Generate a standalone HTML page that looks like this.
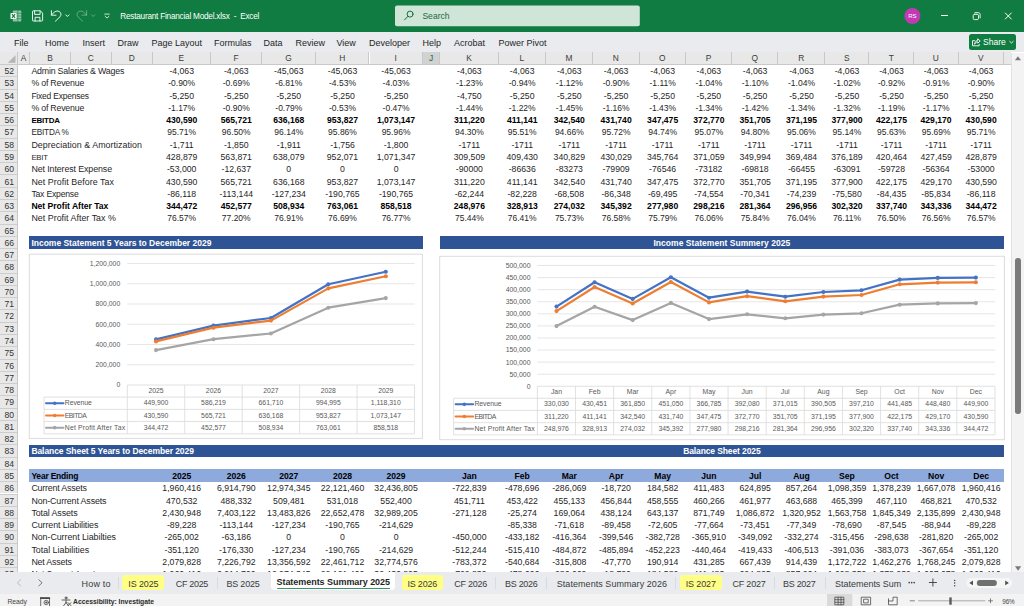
<!DOCTYPE html>
<html lang="en"><head><meta charset="utf-8"><title>Restaurant Financial Model.xlsx - Excel</title>
<style>
html,body{margin:0;padding:0}
body{width:1024px;height:606px;overflow:hidden;position:relative;background:#fff;font-family:"Liberation Sans",sans-serif;color:#222}
.abs,.c,.l,.rh,.ch{position:absolute}
#title{left:0;top:0;width:1024px;height:31.5px;background:#107c41}
#ribbon{left:0;top:31.5px;width:1024px;height:20.3px;background:#e9ebef}
#ribbon span{position:absolute;top:6.4px;font-size:9px;color:#262626;white-space:nowrap}
#grid{left:0;top:51px;width:1011px;height:521.2px;overflow:hidden;background:#fff}
.ch{top:.5px;height:13px;background:#e8e8e8;border-right:1px solid #c8c8c8;box-sizing:border-box;font-size:8.4px;line-height:13px;text-align:center;color:#3c3c3c}
.rh{left:0;width:18px;height:12.27px;background:#e8e8e8;border-top:1px solid #cdcdcd;border-right:1px solid #c8c8c8;box-sizing:border-box;font-size:8.6px;text-align:center;color:#333}
.rh span{position:absolute;left:0;width:17px;line-height:12px;height:12px}
.c{height:12px;line-height:12px;font-size:8.7px;text-align:center;white-space:nowrap;color:#1f1f1f}
.l{height:12px;line-height:12px;font-size:8.9px;white-space:nowrap;color:#1f1f1f;left:31.4px}
.l.b{font-size:8.6px}
.c.b{font-size:8.6px}
.c.p{font-size:8.5px}
.rn{position:absolute;left:0;width:18.4px;height:12px;line-height:12px;font-size:8.6px;text-align:center;color:#333}
.b{font-weight:bold;color:#000}
.bar{position:absolute;background:#2f5496;height:12.27px}
.bt{position:absolute;color:#fff;font-weight:bold;font-size:8.5px;line-height:12px;height:12px;white-space:nowrap}
svg text{font-family:"Liberation Sans",sans-serif}
</style></head><body>

<div id="title" class="abs">
<svg class="abs" style="left:0;top:0" width="1024" height="32" viewBox="0 0 1024 32" fill="none" stroke="#fff" stroke-width=".9" stroke-linecap="round" stroke-linejoin="round">
<!-- excel logo -->
<g stroke="none">
<rect x="12.800" y="10.500" width="8.500" height="11" rx="1" fill="#fff" fill-opacity=".55"/>
<path d="M12.800 13.300H21.300M12.800 16H21.300M12.800 18.700H21.300M17.800 10.500V21.500" stroke="#107c41" stroke-width=".7" stroke-opacity=".8"/>
<rect x="10.500" y="13" width="6" height="6" rx=".7" fill="#fff"/>
<path d="M12.200 14.300L14.800 17.700M14.800 14.300L12.200 17.700" stroke="#107c41" stroke-width="1.1"/>
</g>
<!-- save -->
<path d="M32.5 11.5a.7.7 0 0 1 .7-.7H40.3L42.6 13.1V20.3a.7.7 0 0 1-.7.7H33.2a.7.7 0 0 1-.7-.7Z"/>
<path d="M34.6 10.9V14.4H40.1V10.9M35.1 21V17.3H39.9V21"/>
<!-- undo -->
<path d="M51.4 10.6V15.2H56M51.6 15C53.5 12 56.5 10.300 59 11.4C61.2 12.5 61.600 15 60 16.8L55.4 21.2"/>
<path d="M65.8 14.900L67.400 16.500L69 14.900"/>
<!-- redo (disabled) -->
<g stroke-opacity=".38">
<path d="M86.600 10.6V15.2H82M86.400 15C84.5 12 81.5 10.300 79 11.4C76.800 12.5 76.400 15 78 16.8L82.600 21.2"/>
<path d="M91.600 14.900L93.200 16.500L94.800 14.900"/>
</g>
<!-- customize QAT -->
<path d="M104.800 14.100H109.200M105.100 16.300L107 18.100L108.900 16.300" stroke-width=".8"/>
<!-- search box -->
<rect x="395" y="5.500" width="244.800" height="20.700" rx="2" fill="#cfe5d8" stroke="none"/>
<g stroke="#1e6b41" stroke-width="1">
<circle cx="410.100" cy="14.100" r="3"/><path d="M408 16.300L404.600 19.800"/>
</g>
<!-- avatar -->
<circle cx="912.400" cy="16" r="8" fill="#c239b3" stroke="none"/>
<!-- window buttons -->
<path d="M941.500 15.500H947.500" stroke-width="1"/>
<rect x="973.200" y="14.300" width="5.300" height="5.300" rx="1.300" stroke-width=".9"/>
<path d="M974.900 12.700H978.400C979.400 12.700 980.100 13.400 980.100 14.400V17.900" stroke-width=".9"/>
<path d="M1005.300 13L1011.300 19M1011.300 13L1005.300 19" stroke-width="1"/>
</svg>
<span class="abs" style="left:120.300px;top:10.800px;font-size:8.200px;letter-spacing:-.220px;color:#fff;white-space:pre;line-height:11px">Restaurant Financial Model.xlsx  -  Excel</span>
<span class="abs" style="left:422.400px;top:9.600px;font-size:8.600px;color:#1e6b41;white-space:pre;line-height:12px">Search</span>
<span class="abs" style="left:906.900px;top:11.500px;width:11px;text-align:center;font-size:6px;color:#fff;white-space:pre;line-height:9px">RS</span>

</div>
<div id="ribbon" class="abs">
<span style="left:14px">File</span><span style="left:45px">Home</span><span style="left:82.500px">Insert</span><span style="left:117.500px">Draw</span><span style="left:151.500px">Page Layout</span><span style="left:214px">Formulas</span><span style="left:263.500px">Data</span><span style="left:295.500px">Review</span><span style="left:336.500px">View</span><span style="left:369px">Developer</span><span style="left:422.500px">Help</span><span style="left:454px">Acrobat</span><span style="left:498.500px">Power Pivot</span>
<div class="abs" style="left:968.900px;top:2.600px;width:47.300px;height:16px;background:#107c41;border-radius:2.500px"></div>
<svg class="abs" style="left:968.900px;top:2.600px" width="48" height="16" viewBox="0 0 48 16" fill="none" stroke="#fff" stroke-width=".9" stroke-linecap="round" stroke-linejoin="round"><path d="M5.800 6.700H3.500V11.800H10.200V10.300M5.700 9.900C5.900 7.800 7.100 6.600 8.700 6.400V4.800L11.200 7L8.700 9.200V7.800C7.400 7.800 6.400 8.500 5.700 9.900Z"/><path d="M40.800 7.400L42.500 9L44.200 7.400"/></svg>
<span style="left:983.100px;top:5.600px;color:#fff;font-size:8.600px;letter-spacing:-.050px">Share</span>

</div>
<div id="grid" class="abs">
<div class="abs" style="left:0;top:0;width:1011px;height:1px;background:#e9ebef"></div>
<div class="ch" style="left:0;width:18px"><svg width="17" height="13" style="position:absolute;left:0;top:0"><path d="M15.5 3.2 L15.5 10.8 L7.8 10.8 Z" fill="#b5b5b5"/></svg></div>
<div class="ch" style="left:18.0px;width:12.1px">A</div>
<div class="ch" style="left:30.1px;width:40.8px">B</div>
<div class="ch" style="left:70.9px;width:40.9px">C</div>
<div class="ch" style="left:111.8px;width:41.2px">D</div>
<div class="ch" style="left:153.0px;width:57.8px">E</div>
<div class="ch" style="left:210.8px;width:51.3px">F</div>
<div class="ch" style="left:262.1px;width:53.8px">G</div>
<div class="ch" style="left:315.9px;width:53.6px">H</div>
<div class="ch" style="left:369.5px;width:53.5px">I</div>
<div class="ch" style="left:423.0px;width:17.4px;background:#d2d2d2;color:#1e6b41;border-bottom:1.3px solid #1e7145">J</div>
<div class="ch" style="left:440.4px;width:58.4px">K</div>
<div class="ch" style="left:498.8px;width:47.2px">L</div>
<div class="ch" style="left:546.0px;width:47.0px">M</div>
<div class="ch" style="left:593.0px;width:46.7px">N</div>
<div class="ch" style="left:639.7px;width:46.3px">O</div>
<div class="ch" style="left:686.0px;width:46.2px">P</div>
<div class="ch" style="left:732.2px;width:46.2px">Q</div>
<div class="ch" style="left:778.4px;width:46.6px">R</div>
<div class="ch" style="left:825.0px;width:44.4px">S</div>
<div class="ch" style="left:869.4px;width:44.6px">T</div>
<div class="ch" style="left:914.0px;width:44.6px">U</div>
<div class="ch" style="left:958.6px;width:45.5px">V</div>
<div class="ch" style="left:1004.1px;width:26.5px"></div>
<div class="rh" style="top:13.05px"></div>
<div class="rn" style="top:14px">52</div>
<div class="rh" style="top:25.32px"></div>
<div class="rn" style="top:26px">53</div>
<div class="rh" style="top:37.59px"></div>
<div class="rn" style="top:39px">54</div>
<div class="rh" style="top:49.86px"></div>
<div class="rn" style="top:51px">55</div>
<div class="rh" style="top:62.13px"></div>
<div class="rn" style="top:63px">56</div>
<div class="rh" style="top:74.40px"></div>
<div class="rn" style="top:75px">57</div>
<div class="rh" style="top:86.67px"></div>
<div class="rn" style="top:88px">58</div>
<div class="rh" style="top:98.94px"></div>
<div class="rn" style="top:100px">59</div>
<div class="rh" style="top:111.21px"></div>
<div class="rn" style="top:112px">60</div>
<div class="rh" style="top:123.48px"></div>
<div class="rn" style="top:125px">61</div>
<div class="rh" style="top:135.75px"></div>
<div class="rn" style="top:137px">62</div>
<div class="rh" style="top:148.02px"></div>
<div class="rn" style="top:149px">63</div>
<div class="rh" style="top:160.29px"></div>
<div class="rn" style="top:161px">64</div>
<div class="rh" style="top:172.56px"></div>
<div class="rn" style="top:174px">65</div>
<div class="rh" style="top:184.83px"></div>
<div class="rn" style="top:186px">66</div>
<div class="rh" style="top:197.10px"></div>
<div class="rn" style="top:198px">67</div>
<div class="rh" style="top:209.37px"></div>
<div class="rn" style="top:210px">68</div>
<div class="rh" style="top:221.64px"></div>
<div class="rn" style="top:223px">69</div>
<div class="rh" style="top:233.91px"></div>
<div class="rn" style="top:235px">70</div>
<div class="rh" style="top:246.18px"></div>
<div class="rn" style="top:247px">71</div>
<div class="rh" style="top:258.45px"></div>
<div class="rn" style="top:259px">72</div>
<div class="rh" style="top:270.72px"></div>
<div class="rn" style="top:272px">73</div>
<div class="rh" style="top:282.99px"></div>
<div class="rn" style="top:284px">74</div>
<div class="rh" style="top:295.26px"></div>
<div class="rn" style="top:296px">75</div>
<div class="rh" style="top:307.53px"></div>
<div class="rn" style="top:309px">76</div>
<div class="rh" style="top:319.80px"></div>
<div class="rn" style="top:321px">77</div>
<div class="rh" style="top:332.07px"></div>
<div class="rn" style="top:333px">78</div>
<div class="rh" style="top:344.34px"></div>
<div class="rn" style="top:345px">79</div>
<div class="rh" style="top:356.61px"></div>
<div class="rn" style="top:358px">80</div>
<div class="rh" style="top:368.88px"></div>
<div class="rn" style="top:370px">81</div>
<div class="rh" style="top:381.15px"></div>
<div class="rn" style="top:382px">82</div>
<div class="rh" style="top:393.42px"></div>
<div class="rn" style="top:394px">83</div>
<div class="rh" style="top:405.69px"></div>
<div class="rn" style="top:407px">84</div>
<div class="rh" style="top:417.96px"></div>
<div class="rn" style="top:419px">85</div>
<div class="rh" style="top:430.23px"></div>
<div class="rn" style="top:431px">86</div>
<div class="rh" style="top:442.50px"></div>
<div class="rn" style="top:444px">87</div>
<div class="rh" style="top:454.77px"></div>
<div class="rn" style="top:456px">88</div>
<div class="rh" style="top:467.04px"></div>
<div class="rn" style="top:468px">89</div>
<div class="rh" style="top:479.31px"></div>
<div class="rn" style="top:480px">90</div>
<div class="rh" style="top:491.58px"></div>
<div class="rn" style="top:493px">91</div>
<div class="rh" style="top:503.85px"></div>
<div class="rn" style="top:505px">92</div>
<div class="rh" style="top:516.12px"></div>
<div class="rn" style="top:517px">93</div>
<div class="abs" style="left:0;top:13.05px;width:1011px;height:1px;background:#c9c9c9"></div>
<div class="abs" style="left:29.3px;top:418.46px;width:974.6px;height:12.27px;background:#8ea9db"></div>
<div class="bar" style="left:29.3px;top:185.33px;width:393.3px"></div>
<div class="bar" style="left:439.8px;top:185.33px;width:564.1px"></div>
<div class="bar" style="left:29.3px;top:393.92px;width:974.6px"></div>
<div class="bt" style="left:31.40px;top:186px;letter-spacing:-0.008px">Income Statement 5 Years to December 2029</div>
<div class="bt" style="left:653.45px;top:186px;letter-spacing:0.042px">Income Statement Summery 2025</div>
<div class="bt" style="left:31.40px;top:394px;letter-spacing:-0.074px">Balance Sheet 5 Years to December 2029</div>
<div class="bt" style="left:683.15px;top:394px;letter-spacing:-0.111px">Balance Sheet 2025</div>
<div class="l" style="top:14px;letter-spacing:-0.200px;font-size:8.82px;line-height:13px">Admin Salaries &amp; Wages</div>
<div class="c" style="left:152.8px;width:57.8px;top:14px">-4,063</div>
<div class="c" style="left:210.6px;width:51.3px;top:14px">-4,063</div>
<div class="c" style="left:261.9px;width:53.8px;top:14px">-45,063</div>
<div class="c" style="left:315.7px;width:53.6px;top:14px">-45,063</div>
<div class="c" style="left:369.3px;width:53.5px;top:14px">-45,063</div>
<div class="c" style="left:440.2px;width:58.4px;top:14px">-4,063</div>
<div class="c" style="left:498.6px;width:47.2px;top:14px">-4,063</div>
<div class="c" style="left:545.8px;width:47.0px;top:14px">-4,063</div>
<div class="c" style="left:592.8px;width:46.7px;top:14px">-4,063</div>
<div class="c" style="left:639.5px;width:46.3px;top:14px">-4,063</div>
<div class="c" style="left:685.8px;width:46.2px;top:14px">-4,063</div>
<div class="c" style="left:732.0px;width:46.2px;top:14px">-4,063</div>
<div class="c" style="left:778.2px;width:46.6px;top:14px">-4,063</div>
<div class="c" style="left:824.8px;width:44.4px;top:14px">-4,063</div>
<div class="c" style="left:869.2px;width:44.6px;top:14px">-4,063</div>
<div class="c" style="left:913.8px;width:44.6px;top:14px">-4,063</div>
<div class="c" style="left:958.4px;width:45.5px;top:14px">-4,063</div>
<div class="l" style="top:26px;letter-spacing:-0.200px;font-size:8.78px;line-height:13px">% of Revenue</div>
<div class="c p" style="left:152.8px;width:57.8px;top:26px">-0.90%</div>
<div class="c p" style="left:210.6px;width:51.3px;top:26px">-0.69%</div>
<div class="c p" style="left:261.9px;width:53.8px;top:26px">-6.81%</div>
<div class="c p" style="left:315.7px;width:53.6px;top:26px">-4.53%</div>
<div class="c p" style="left:369.3px;width:53.5px;top:26px">-4.03%</div>
<div class="c p" style="left:440.2px;width:58.4px;top:26px">-1.23%</div>
<div class="c p" style="left:498.6px;width:47.2px;top:26px">-0.94%</div>
<div class="c p" style="left:545.8px;width:47.0px;top:26px">-1.12%</div>
<div class="c p" style="left:592.8px;width:46.7px;top:26px">-0.90%</div>
<div class="c p" style="left:639.5px;width:46.3px;top:26px">-1.11%</div>
<div class="c p" style="left:685.8px;width:46.2px;top:26px">-1.04%</div>
<div class="c p" style="left:732.0px;width:46.2px;top:26px">-1.10%</div>
<div class="c p" style="left:778.2px;width:46.6px;top:26px">-1.04%</div>
<div class="c p" style="left:824.8px;width:44.4px;top:26px">-1.02%</div>
<div class="c p" style="left:869.2px;width:44.6px;top:26px">-0.92%</div>
<div class="c p" style="left:913.8px;width:44.6px;top:26px">-0.91%</div>
<div class="c p" style="left:958.4px;width:45.5px;top:26px">-0.90%</div>
<div class="l" style="top:39px;letter-spacing:-0.200px;font-size:8.48px;line-height:13px">Fixed Expenses</div>
<div class="c" style="left:152.8px;width:57.8px;top:39px">-5,250</div>
<div class="c" style="left:210.6px;width:51.3px;top:39px">-5,250</div>
<div class="c" style="left:261.9px;width:53.8px;top:39px">-5,250</div>
<div class="c" style="left:315.7px;width:53.6px;top:39px">-5,250</div>
<div class="c" style="left:369.3px;width:53.5px;top:39px">-5,250</div>
<div class="c" style="left:440.2px;width:58.4px;top:39px">-4,750</div>
<div class="c" style="left:498.6px;width:47.2px;top:39px">-5,250</div>
<div class="c" style="left:545.8px;width:47.0px;top:39px">-5,250</div>
<div class="c" style="left:592.8px;width:46.7px;top:39px">-5,250</div>
<div class="c" style="left:639.5px;width:46.3px;top:39px">-5,250</div>
<div class="c" style="left:685.8px;width:46.2px;top:39px">-5,250</div>
<div class="c" style="left:732.0px;width:46.2px;top:39px">-5,250</div>
<div class="c" style="left:778.2px;width:46.6px;top:39px">-5,250</div>
<div class="c" style="left:824.8px;width:44.4px;top:39px">-5,250</div>
<div class="c" style="left:869.2px;width:44.6px;top:39px">-5,250</div>
<div class="c" style="left:913.8px;width:44.6px;top:39px">-5,250</div>
<div class="c" style="left:958.4px;width:45.5px;top:39px">-5,250</div>
<div class="l" style="top:51px;letter-spacing:-0.200px;font-size:8.78px;line-height:13px">% of Revenue</div>
<div class="c p" style="left:152.8px;width:57.8px;top:51px">-1.17%</div>
<div class="c p" style="left:210.6px;width:51.3px;top:51px">-0.90%</div>
<div class="c p" style="left:261.9px;width:53.8px;top:51px">-0.79%</div>
<div class="c p" style="left:315.7px;width:53.6px;top:51px">-0.53%</div>
<div class="c p" style="left:369.3px;width:53.5px;top:51px">-0.47%</div>
<div class="c p" style="left:440.2px;width:58.4px;top:51px">-1.44%</div>
<div class="c p" style="left:498.6px;width:47.2px;top:51px">-1.22%</div>
<div class="c p" style="left:545.8px;width:47.0px;top:51px">-1.45%</div>
<div class="c p" style="left:592.8px;width:46.7px;top:51px">-1.16%</div>
<div class="c p" style="left:639.5px;width:46.3px;top:51px">-1.43%</div>
<div class="c p" style="left:685.8px;width:46.2px;top:51px">-1.34%</div>
<div class="c p" style="left:732.0px;width:46.2px;top:51px">-1.42%</div>
<div class="c p" style="left:778.2px;width:46.6px;top:51px">-1.34%</div>
<div class="c p" style="left:824.8px;width:44.4px;top:51px">-1.32%</div>
<div class="c p" style="left:869.2px;width:44.6px;top:51px">-1.19%</div>
<div class="c p" style="left:913.8px;width:44.6px;top:51px">-1.17%</div>
<div class="c p" style="left:958.4px;width:45.5px;top:51px">-1.17%</div>
<div class="l b" style="top:63px;letter-spacing:-0.200px;font-size:7.95px;line-height:13px">EBITDA</div>
<div class="c b" style="left:152.8px;width:57.8px;top:63px">430,590</div>
<div class="c b" style="left:210.6px;width:51.3px;top:63px">565,721</div>
<div class="c b" style="left:261.9px;width:53.8px;top:63px">636,168</div>
<div class="c b" style="left:315.7px;width:53.6px;top:63px">953,827</div>
<div class="c b" style="left:369.3px;width:53.5px;top:63px">1,073,147</div>
<div class="c b" style="left:440.2px;width:58.4px;top:63px">311,220</div>
<div class="c b" style="left:498.6px;width:47.2px;top:63px">411,141</div>
<div class="c b" style="left:545.8px;width:47.0px;top:63px">342,540</div>
<div class="c b" style="left:592.8px;width:46.7px;top:63px">431,740</div>
<div class="c b" style="left:639.5px;width:46.3px;top:63px">347,475</div>
<div class="c b" style="left:685.8px;width:46.2px;top:63px">372,770</div>
<div class="c b" style="left:732.0px;width:46.2px;top:63px">351,705</div>
<div class="c b" style="left:778.2px;width:46.6px;top:63px">371,195</div>
<div class="c b" style="left:824.8px;width:44.4px;top:63px">377,900</div>
<div class="c b" style="left:869.2px;width:44.6px;top:63px">422,175</div>
<div class="c b" style="left:913.8px;width:44.6px;top:63px">429,170</div>
<div class="c b" style="left:958.4px;width:45.5px;top:63px">430,590</div>
<div class="l" style="top:75px;letter-spacing:-0.200px;font-size:8.24px;line-height:13px">EBITDA %</div>
<div class="c p" style="left:152.8px;width:57.8px;top:75px">95.71%</div>
<div class="c p" style="left:210.6px;width:51.3px;top:75px">96.50%</div>
<div class="c p" style="left:261.9px;width:53.8px;top:75px">96.14%</div>
<div class="c p" style="left:315.7px;width:53.6px;top:75px">95.86%</div>
<div class="c p" style="left:369.3px;width:53.5px;top:75px">95.96%</div>
<div class="c p" style="left:440.2px;width:58.4px;top:75px">94.30%</div>
<div class="c p" style="left:498.6px;width:47.2px;top:75px">95.51%</div>
<div class="c p" style="left:545.8px;width:47.0px;top:75px">94.66%</div>
<div class="c p" style="left:592.8px;width:46.7px;top:75px">95.72%</div>
<div class="c p" style="left:639.5px;width:46.3px;top:75px">94.74%</div>
<div class="c p" style="left:685.8px;width:46.2px;top:75px">95.07%</div>
<div class="c p" style="left:732.0px;width:46.2px;top:75px">94.80%</div>
<div class="c p" style="left:778.2px;width:46.6px;top:75px">95.06%</div>
<div class="c p" style="left:824.8px;width:44.4px;top:75px">95.14%</div>
<div class="c p" style="left:869.2px;width:44.6px;top:75px">95.63%</div>
<div class="c p" style="left:913.8px;width:44.6px;top:75px">95.69%</div>
<div class="c p" style="left:958.4px;width:45.5px;top:75px">95.71%</div>
<div class="l" style="top:88px;letter-spacing:0.040px">Depreciation &amp; Amortization</div>
<div class="c" style="left:152.8px;width:57.8px;top:88px">-1,711</div>
<div class="c" style="left:210.6px;width:51.3px;top:88px">-1,850</div>
<div class="c" style="left:261.9px;width:53.8px;top:88px">-1,911</div>
<div class="c" style="left:315.7px;width:53.6px;top:88px">-1,756</div>
<div class="c" style="left:369.3px;width:53.5px;top:88px">-1,800</div>
<div class="c" style="left:440.2px;width:58.4px;top:88px">-1711</div>
<div class="c" style="left:498.6px;width:47.2px;top:88px">-1711</div>
<div class="c" style="left:545.8px;width:47.0px;top:88px">-1711</div>
<div class="c" style="left:592.8px;width:46.7px;top:88px">-1711</div>
<div class="c" style="left:639.5px;width:46.3px;top:88px">-1711</div>
<div class="c" style="left:685.8px;width:46.2px;top:88px">-1711</div>
<div class="c" style="left:732.0px;width:46.2px;top:88px">-1711</div>
<div class="c" style="left:778.2px;width:46.6px;top:88px">-1711</div>
<div class="c" style="left:824.8px;width:44.4px;top:88px">-1711</div>
<div class="c" style="left:869.2px;width:44.6px;top:88px">-1711</div>
<div class="c" style="left:913.8px;width:44.6px;top:88px">-1711</div>
<div class="c" style="left:958.4px;width:45.5px;top:88px">-1711</div>
<div class="l" style="top:100px;letter-spacing:-0.200px;font-size:7.76px;line-height:13px">EBIT</div>
<div class="c" style="left:152.8px;width:57.8px;top:100px">428,879</div>
<div class="c" style="left:210.6px;width:51.3px;top:100px">563,871</div>
<div class="c" style="left:261.9px;width:53.8px;top:100px">638,079</div>
<div class="c" style="left:315.7px;width:53.6px;top:100px">952,071</div>
<div class="c" style="left:369.3px;width:53.5px;top:100px">1,071,347</div>
<div class="c" style="left:440.2px;width:58.4px;top:100px">309,509</div>
<div class="c" style="left:498.6px;width:47.2px;top:100px">409,430</div>
<div class="c" style="left:545.8px;width:47.0px;top:100px">340,829</div>
<div class="c" style="left:592.8px;width:46.7px;top:100px">430,029</div>
<div class="c" style="left:639.5px;width:46.3px;top:100px">345,764</div>
<div class="c" style="left:685.8px;width:46.2px;top:100px">371,059</div>
<div class="c" style="left:732.0px;width:46.2px;top:100px">349,994</div>
<div class="c" style="left:778.2px;width:46.6px;top:100px">369,484</div>
<div class="c" style="left:824.8px;width:44.4px;top:100px">376,189</div>
<div class="c" style="left:869.2px;width:44.6px;top:100px">420,464</div>
<div class="c" style="left:913.8px;width:44.6px;top:100px">427,459</div>
<div class="c" style="left:958.4px;width:45.5px;top:100px">428,879</div>
<div class="l" style="top:112px;letter-spacing:-0.115px">Net Interest Expense</div>
<div class="c" style="left:152.8px;width:57.8px;top:112px">-53,000</div>
<div class="c" style="left:210.6px;width:51.3px;top:112px">-12,637</div>
<div class="c" style="left:261.9px;width:53.8px;top:112px">0</div>
<div class="c" style="left:315.7px;width:53.6px;top:112px">0</div>
<div class="c" style="left:369.3px;width:53.5px;top:112px">0</div>
<div class="c" style="left:440.2px;width:58.4px;top:112px">-90000</div>
<div class="c" style="left:498.6px;width:47.2px;top:112px">-86636</div>
<div class="c" style="left:545.8px;width:47.0px;top:112px">-83273</div>
<div class="c" style="left:592.8px;width:46.7px;top:112px">-79909</div>
<div class="c" style="left:639.5px;width:46.3px;top:112px">-76546</div>
<div class="c" style="left:685.8px;width:46.2px;top:112px">-73182</div>
<div class="c" style="left:732.0px;width:46.2px;top:112px">-69818</div>
<div class="c" style="left:778.2px;width:46.6px;top:112px">-66455</div>
<div class="c" style="left:824.8px;width:44.4px;top:112px">-63091</div>
<div class="c" style="left:869.2px;width:44.6px;top:112px">-59728</div>
<div class="c" style="left:913.8px;width:44.6px;top:112px">-56364</div>
<div class="c" style="left:958.4px;width:45.5px;top:112px">-53000</div>
<div class="l" style="top:125px;letter-spacing:0.041px">Net Profit Before Tax</div>
<div class="c" style="left:152.8px;width:57.8px;top:125px">430,590</div>
<div class="c" style="left:210.6px;width:51.3px;top:125px">565,721</div>
<div class="c" style="left:261.9px;width:53.8px;top:125px">636,168</div>
<div class="c" style="left:315.7px;width:53.6px;top:125px">953,827</div>
<div class="c" style="left:369.3px;width:53.5px;top:125px">1,073,147</div>
<div class="c" style="left:440.2px;width:58.4px;top:125px">311,220</div>
<div class="c" style="left:498.6px;width:47.2px;top:125px">411,141</div>
<div class="c" style="left:545.8px;width:47.0px;top:125px">342,540</div>
<div class="c" style="left:592.8px;width:46.7px;top:125px">431,740</div>
<div class="c" style="left:639.5px;width:46.3px;top:125px">347,475</div>
<div class="c" style="left:685.8px;width:46.2px;top:125px">372,770</div>
<div class="c" style="left:732.0px;width:46.2px;top:125px">351,705</div>
<div class="c" style="left:778.2px;width:46.6px;top:125px">371,195</div>
<div class="c" style="left:824.8px;width:44.4px;top:125px">377,900</div>
<div class="c" style="left:869.2px;width:44.6px;top:125px">422,175</div>
<div class="c" style="left:913.8px;width:44.6px;top:125px">429,170</div>
<div class="c" style="left:958.4px;width:45.5px;top:125px">430,590</div>
<div class="l" style="top:137px;letter-spacing:-0.200px;font-size:8.65px;line-height:13px">Tax Expense</div>
<div class="c" style="left:152.8px;width:57.8px;top:137px">-86,118</div>
<div class="c" style="left:210.6px;width:51.3px;top:137px">-113,144</div>
<div class="c" style="left:261.9px;width:53.8px;top:137px">-127,234</div>
<div class="c" style="left:315.7px;width:53.6px;top:137px">-190,765</div>
<div class="c" style="left:369.3px;width:53.5px;top:137px">-190,765</div>
<div class="c" style="left:440.2px;width:58.4px;top:137px">-62,244</div>
<div class="c" style="left:498.6px;width:47.2px;top:137px">-82,228</div>
<div class="c" style="left:545.8px;width:47.0px;top:137px">-68,508</div>
<div class="c" style="left:592.8px;width:46.7px;top:137px">-86,348</div>
<div class="c" style="left:639.5px;width:46.3px;top:137px">-69,495</div>
<div class="c" style="left:685.8px;width:46.2px;top:137px">-74,554</div>
<div class="c" style="left:732.0px;width:46.2px;top:137px">-70,341</div>
<div class="c" style="left:778.2px;width:46.6px;top:137px">-74,239</div>
<div class="c" style="left:824.8px;width:44.4px;top:137px">-75,580</div>
<div class="c" style="left:869.2px;width:44.6px;top:137px">-84,435</div>
<div class="c" style="left:913.8px;width:44.6px;top:137px">-85,834</div>
<div class="c" style="left:958.4px;width:45.5px;top:137px">-86,118</div>
<div class="l b" style="top:149px;letter-spacing:-0.023px">Net Profit After Tax</div>
<div class="c b" style="left:152.8px;width:57.8px;top:149px">344,472</div>
<div class="c b" style="left:210.6px;width:51.3px;top:149px">452,577</div>
<div class="c b" style="left:261.9px;width:53.8px;top:149px">508,934</div>
<div class="c b" style="left:315.7px;width:53.6px;top:149px">763,061</div>
<div class="c b" style="left:369.3px;width:53.5px;top:149px">858,518</div>
<div class="c b" style="left:440.2px;width:58.4px;top:149px">248,976</div>
<div class="c b" style="left:498.6px;width:47.2px;top:149px">328,913</div>
<div class="c b" style="left:545.8px;width:47.0px;top:149px">274,032</div>
<div class="c b" style="left:592.8px;width:46.7px;top:149px">345,392</div>
<div class="c b" style="left:639.5px;width:46.3px;top:149px">277,980</div>
<div class="c b" style="left:685.8px;width:46.2px;top:149px">298,216</div>
<div class="c b" style="left:732.0px;width:46.2px;top:149px">281,364</div>
<div class="c b" style="left:778.2px;width:46.6px;top:149px">296,956</div>
<div class="c b" style="left:824.8px;width:44.4px;top:149px">302,320</div>
<div class="c b" style="left:869.2px;width:44.6px;top:149px">337,740</div>
<div class="c b" style="left:913.8px;width:44.6px;top:149px">343,336</div>
<div class="c b" style="left:958.4px;width:45.5px;top:149px">344,472</div>
<div class="l" style="top:161px;letter-spacing:0.014px">Net Profit After Tax %</div>
<div class="c p" style="left:152.8px;width:57.8px;top:161px">76.57%</div>
<div class="c p" style="left:210.6px;width:51.3px;top:161px">77.20%</div>
<div class="c p" style="left:261.9px;width:53.8px;top:161px">76.91%</div>
<div class="c p" style="left:315.7px;width:53.6px;top:161px">76.69%</div>
<div class="c p" style="left:369.3px;width:53.5px;top:161px">76.77%</div>
<div class="c p" style="left:440.2px;width:58.4px;top:161px">75.44%</div>
<div class="c p" style="left:498.6px;width:47.2px;top:161px">76.41%</div>
<div class="c p" style="left:545.8px;width:47.0px;top:161px">75.73%</div>
<div class="c p" style="left:592.8px;width:46.7px;top:161px">76.58%</div>
<div class="c p" style="left:639.5px;width:46.3px;top:161px">75.79%</div>
<div class="c p" style="left:685.8px;width:46.2px;top:161px">76.06%</div>
<div class="c p" style="left:732.0px;width:46.2px;top:161px">75.84%</div>
<div class="c p" style="left:778.2px;width:46.6px;top:161px">76.04%</div>
<div class="c p" style="left:824.8px;width:44.4px;top:161px">76.11%</div>
<div class="c p" style="left:869.2px;width:44.6px;top:161px">76.50%</div>
<div class="c p" style="left:913.8px;width:44.6px;top:161px">76.56%</div>
<div class="c p" style="left:958.4px;width:45.5px;top:161px">76.57%</div>
<div class="l b" style="top:419px;letter-spacing:-0.200px;font-size:8.47px;line-height:13px">Year Ending</div>
<div class="c b" style="left:152.8px;width:57.8px;top:419px">2025</div>
<div class="c b" style="left:210.6px;width:51.3px;top:419px">2026</div>
<div class="c b" style="left:261.9px;width:53.8px;top:419px">2027</div>
<div class="c b" style="left:315.7px;width:53.6px;top:419px">2028</div>
<div class="c b" style="left:369.3px;width:53.5px;top:419px">2029</div>
<div class="c b" style="left:440.2px;width:58.4px;top:419px">Jan</div>
<div class="c b" style="left:498.6px;width:47.2px;top:419px">Feb</div>
<div class="c b" style="left:545.8px;width:47.0px;top:419px">Mar</div>
<div class="c b" style="left:592.8px;width:46.7px;top:419px">Apr</div>
<div class="c b" style="left:639.5px;width:46.3px;top:419px">May</div>
<div class="c b" style="left:685.8px;width:46.2px;top:419px">Jun</div>
<div class="c b" style="left:732.0px;width:46.2px;top:419px">Jul</div>
<div class="c b" style="left:778.2px;width:46.6px;top:419px">Aug</div>
<div class="c b" style="left:824.8px;width:44.4px;top:419px">Sep</div>
<div class="c b" style="left:869.2px;width:44.6px;top:419px">Oct</div>
<div class="c b" style="left:913.8px;width:44.6px;top:419px">Nov</div>
<div class="c b" style="left:958.4px;width:45.5px;top:419px">Dec</div>
<div class="l" style="top:431px;letter-spacing:-0.200px;font-size:8.87px;line-height:13px">Current Assets</div>
<div class="c" style="left:152.8px;width:57.8px;top:431px">1,960,416</div>
<div class="c" style="left:210.6px;width:51.3px;top:431px">6,914,790</div>
<div class="c" style="left:261.9px;width:53.8px;top:431px">12,974,345</div>
<div class="c" style="left:315.7px;width:53.6px;top:431px">22,121,460</div>
<div class="c" style="left:369.3px;width:53.5px;top:431px">32,436,805</div>
<div class="c" style="left:440.2px;width:58.4px;top:431px">-722,839</div>
<div class="c" style="left:498.6px;width:47.2px;top:431px">-478,696</div>
<div class="c" style="left:545.8px;width:47.0px;top:431px">-286,069</div>
<div class="c" style="left:592.8px;width:46.7px;top:431px">-18,720</div>
<div class="c" style="left:639.5px;width:46.3px;top:431px">184,582</div>
<div class="c" style="left:685.8px;width:46.2px;top:431px">411,483</div>
<div class="c" style="left:732.0px;width:46.2px;top:431px">624,895</div>
<div class="c" style="left:778.2px;width:46.6px;top:431px">857,264</div>
<div class="c" style="left:824.8px;width:44.4px;top:431px">1,098,359</div>
<div class="c" style="left:869.2px;width:44.6px;top:431px">1,378,239</div>
<div class="c" style="left:913.8px;width:44.6px;top:431px">1,667,078</div>
<div class="c" style="left:958.4px;width:45.5px;top:431px">1,960,416</div>
<div class="l" style="top:444px;letter-spacing:-0.136px">Non-Current Assets</div>
<div class="c" style="left:152.8px;width:57.8px;top:444px">470,532</div>
<div class="c" style="left:210.6px;width:51.3px;top:444px">488,332</div>
<div class="c" style="left:261.9px;width:53.8px;top:444px">509,481</div>
<div class="c" style="left:315.7px;width:53.6px;top:444px">531,018</div>
<div class="c" style="left:369.3px;width:53.5px;top:444px">552,400</div>
<div class="c" style="left:440.2px;width:58.4px;top:444px">451,711</div>
<div class="c" style="left:498.6px;width:47.2px;top:444px">453,422</div>
<div class="c" style="left:545.8px;width:47.0px;top:444px">455,133</div>
<div class="c" style="left:592.8px;width:46.7px;top:444px">456,844</div>
<div class="c" style="left:639.5px;width:46.3px;top:444px">458,555</div>
<div class="c" style="left:685.8px;width:46.2px;top:444px">460,266</div>
<div class="c" style="left:732.0px;width:46.2px;top:444px">461,977</div>
<div class="c" style="left:778.2px;width:46.6px;top:444px">463,688</div>
<div class="c" style="left:824.8px;width:44.4px;top:444px">465,399</div>
<div class="c" style="left:869.2px;width:44.6px;top:444px">467,110</div>
<div class="c" style="left:913.8px;width:44.6px;top:444px">468,821</div>
<div class="c" style="left:958.4px;width:45.5px;top:444px">470,532</div>
<div class="l" style="top:456px;letter-spacing:-0.105px">Total Assets</div>
<div class="c" style="left:152.8px;width:57.8px;top:456px">2,430,948</div>
<div class="c" style="left:210.6px;width:51.3px;top:456px">7,403,122</div>
<div class="c" style="left:261.9px;width:53.8px;top:456px">13,483,826</div>
<div class="c" style="left:315.7px;width:53.6px;top:456px">22,652,478</div>
<div class="c" style="left:369.3px;width:53.5px;top:456px">32,989,205</div>
<div class="c" style="left:440.2px;width:58.4px;top:456px">-271,128</div>
<div class="c" style="left:498.6px;width:47.2px;top:456px">-25,274</div>
<div class="c" style="left:545.8px;width:47.0px;top:456px">169,064</div>
<div class="c" style="left:592.8px;width:46.7px;top:456px">438,124</div>
<div class="c" style="left:639.5px;width:46.3px;top:456px">643,137</div>
<div class="c" style="left:685.8px;width:46.2px;top:456px">871,749</div>
<div class="c" style="left:732.0px;width:46.2px;top:456px">1,086,872</div>
<div class="c" style="left:778.2px;width:46.6px;top:456px">1,320,952</div>
<div class="c" style="left:824.8px;width:44.4px;top:456px">1,563,758</div>
<div class="c" style="left:869.2px;width:44.6px;top:456px">1,845,349</div>
<div class="c" style="left:913.8px;width:44.6px;top:456px">2,135,899</div>
<div class="c" style="left:958.4px;width:45.5px;top:456px">2,430,948</div>
<div class="l" style="top:468px;letter-spacing:-0.088px">Current Liabilities</div>
<div class="c" style="left:152.8px;width:57.8px;top:468px">-89,228</div>
<div class="c" style="left:210.6px;width:51.3px;top:468px">-113,144</div>
<div class="c" style="left:261.9px;width:53.8px;top:468px">-127,234</div>
<div class="c" style="left:315.7px;width:53.6px;top:468px">-190,765</div>
<div class="c" style="left:369.3px;width:53.5px;top:468px">-214,629</div>
<div class="c" style="left:498.6px;width:47.2px;top:468px">-85,338</div>
<div class="c" style="left:545.8px;width:47.0px;top:468px">-71,618</div>
<div class="c" style="left:592.8px;width:46.7px;top:468px">-89,458</div>
<div class="c" style="left:639.5px;width:46.3px;top:468px">-72,605</div>
<div class="c" style="left:685.8px;width:46.2px;top:468px">-77,664</div>
<div class="c" style="left:732.0px;width:46.2px;top:468px">-73,451</div>
<div class="c" style="left:778.2px;width:46.6px;top:468px">-77,349</div>
<div class="c" style="left:824.8px;width:44.4px;top:468px">-78,690</div>
<div class="c" style="left:869.2px;width:44.6px;top:468px">-87,545</div>
<div class="c" style="left:913.8px;width:44.6px;top:468px">-88,944</div>
<div class="c" style="left:958.4px;width:45.5px;top:468px">-89,228</div>
<div class="l" style="top:480px;letter-spacing:-0.061px">Non-Current Liabilties</div>
<div class="c" style="left:152.8px;width:57.8px;top:480px">-265,002</div>
<div class="c" style="left:210.6px;width:51.3px;top:480px">-63,186</div>
<div class="c" style="left:261.9px;width:53.8px;top:480px">0</div>
<div class="c" style="left:315.7px;width:53.6px;top:480px">0</div>
<div class="c" style="left:369.3px;width:53.5px;top:480px">0</div>
<div class="c" style="left:440.2px;width:58.4px;top:480px">-450,000</div>
<div class="c" style="left:498.6px;width:47.2px;top:480px">-433,182</div>
<div class="c" style="left:545.8px;width:47.0px;top:480px">-416,364</div>
<div class="c" style="left:592.8px;width:46.7px;top:480px">-399,546</div>
<div class="c" style="left:639.5px;width:46.3px;top:480px">-382,728</div>
<div class="c" style="left:685.8px;width:46.2px;top:480px">-365,910</div>
<div class="c" style="left:732.0px;width:46.2px;top:480px">-349,092</div>
<div class="c" style="left:778.2px;width:46.6px;top:480px">-332,274</div>
<div class="c" style="left:824.8px;width:44.4px;top:480px">-315,456</div>
<div class="c" style="left:869.2px;width:44.6px;top:480px">-298,638</div>
<div class="c" style="left:913.8px;width:44.6px;top:480px">-281,820</div>
<div class="c" style="left:958.4px;width:45.5px;top:480px">-265,002</div>
<div class="l" style="top:493px;letter-spacing:-0.001px">Total Liabilities</div>
<div class="c" style="left:152.8px;width:57.8px;top:493px">-351,120</div>
<div class="c" style="left:210.6px;width:51.3px;top:493px">-176,330</div>
<div class="c" style="left:261.9px;width:53.8px;top:493px">-127,234</div>
<div class="c" style="left:315.7px;width:53.6px;top:493px">-190,765</div>
<div class="c" style="left:369.3px;width:53.5px;top:493px">-214,629</div>
<div class="c" style="left:440.2px;width:58.4px;top:493px">-512,244</div>
<div class="c" style="left:498.6px;width:47.2px;top:493px">-515,410</div>
<div class="c" style="left:545.8px;width:47.0px;top:493px">-484,872</div>
<div class="c" style="left:592.8px;width:46.7px;top:493px">-485,894</div>
<div class="c" style="left:639.5px;width:46.3px;top:493px">-452,223</div>
<div class="c" style="left:685.8px;width:46.2px;top:493px">-440,464</div>
<div class="c" style="left:732.0px;width:46.2px;top:493px">-419,433</div>
<div class="c" style="left:778.2px;width:46.6px;top:493px">-406,513</div>
<div class="c" style="left:824.8px;width:44.4px;top:493px">-391,036</div>
<div class="c" style="left:869.2px;width:44.6px;top:493px">-383,073</div>
<div class="c" style="left:913.8px;width:44.6px;top:493px">-367,654</div>
<div class="c" style="left:958.4px;width:45.5px;top:493px">-351,120</div>
<div class="l" style="top:505px;letter-spacing:-0.200px;font-size:8.87px;line-height:13px">Net Assets</div>
<div class="c" style="left:152.8px;width:57.8px;top:505px">2,079,828</div>
<div class="c" style="left:210.6px;width:51.3px;top:505px">7,226,792</div>
<div class="c" style="left:261.9px;width:53.8px;top:505px">13,356,592</div>
<div class="c" style="left:315.7px;width:53.6px;top:505px">22,461,712</div>
<div class="c" style="left:369.3px;width:53.5px;top:505px">32,774,576</div>
<div class="c" style="left:440.2px;width:58.4px;top:505px">-783,372</div>
<div class="c" style="left:498.6px;width:47.2px;top:505px">-540,684</div>
<div class="c" style="left:545.8px;width:47.0px;top:505px">-315,808</div>
<div class="c" style="left:592.8px;width:46.7px;top:505px">-47,770</div>
<div class="c" style="left:639.5px;width:46.3px;top:505px">190,914</div>
<div class="c" style="left:685.8px;width:46.2px;top:505px">431,285</div>
<div class="c" style="left:732.0px;width:46.2px;top:505px">667,439</div>
<div class="c" style="left:778.2px;width:46.6px;top:505px">914,439</div>
<div class="c" style="left:824.8px;width:44.4px;top:505px">1,172,722</div>
<div class="c" style="left:869.2px;width:44.6px;top:505px">1,462,276</div>
<div class="c" style="left:913.8px;width:44.6px;top:505px">1,768,245</div>
<div class="c" style="left:958.4px;width:45.5px;top:505px">2,079,828</div>
<div class="l" style="top:517px;letter-spacing:-0.200px;font-size:8.52px;line-height:13px">Net Current Assets</div>
<div class="c" style="left:152.8px;width:57.8px;top:517px">1,960,416</div>
<div class="c" style="left:210.6px;width:51.3px;top:517px">6,914,790</div>
<div class="c" style="left:261.9px;width:53.8px;top:517px">12,974,345</div>
<div class="c" style="left:315.7px;width:53.6px;top:517px">22,121,460</div>
<div class="c" style="left:369.3px;width:53.5px;top:517px">32,436,805</div>
<div class="c" style="left:440.2px;width:58.4px;top:517px">-722,839</div>
<div class="c" style="left:498.6px;width:47.2px;top:517px">-478,696</div>
<div class="c" style="left:545.8px;width:47.0px;top:517px">-286,069</div>
<div class="c" style="left:592.8px;width:46.7px;top:517px">-18,720</div>
<div class="c" style="left:639.5px;width:46.3px;top:517px">184,582</div>
<div class="c" style="left:685.8px;width:46.2px;top:517px">411,483</div>
<div class="c" style="left:732.0px;width:46.2px;top:517px">624,895</div>
<div class="c" style="left:778.2px;width:46.6px;top:517px">857,264</div>
<div class="c" style="left:824.8px;width:44.4px;top:517px">1,098,359</div>
<div class="c" style="left:869.2px;width:44.6px;top:517px">1,378,239</div>
<div class="c" style="left:913.8px;width:44.6px;top:517px">1,667,078</div>
<div class="c" style="left:958.4px;width:45.5px;top:517px">1,960,416</div>
<svg class="abs" style="left:0;top:0" width="1011" height="521.2" viewBox="0 51 1011 521.2" font-size="6.900">
<rect x="29.3" y="254.2" width="393.1" height="184.2" fill="#fff" stroke="#dcdcdc" stroke-width="1"/>
<path d="M127.3 364.75H414.5" stroke="#dfdfdf" stroke-width=".8"/>
<path d="M127.3 344.50H414.5" stroke="#dfdfdf" stroke-width=".8"/>
<path d="M127.3 324.25H414.5" stroke="#dfdfdf" stroke-width=".8"/>
<path d="M127.3 304.00H414.5" stroke="#dfdfdf" stroke-width=".8"/>
<path d="M127.3 283.75H414.5" stroke="#dfdfdf" stroke-width=".8"/>
<path d="M127.3 263.50H414.5" stroke="#dfdfdf" stroke-width=".8"/>
<g fill="#595959" text-anchor="end" font-size="6.85">
<text x="120.2" y="387.40">0</text>
<text x="120.2" y="367.15">200,000</text>
<text x="120.2" y="346.90">400,000</text>
<text x="120.2" y="326.65">600,000</text>
<text x="120.2" y="306.40">800,000</text>
<text x="120.2" y="286.15">1,000,000</text>
<text x="120.2" y="265.90">1,200,000</text>
</g>
<path d="M127.3 385.00H414.5M44.0 397.10H414.5M44.0 409.40H414.5M44.0 421.50H414.5M44.0 433.80H414.5M44.0 397.10V433.80M127.30 385.00V433.80M184.74 385.00V433.80M242.18 385.00V433.80M299.62 385.00V433.80M357.06 385.00V433.80M414.50 385.00V433.80" stroke="#d9d9d9" stroke-width=".8" fill="none"/>
<g fill="#595959" text-anchor="middle" font-size="6.85">
<text x="156.02" y="393.15">2025</text>
<text x="213.46" y="393.15">2026</text>
<text x="270.90" y="393.15">2027</text>
<text x="328.34" y="393.15">2028</text>
<text x="385.78" y="393.15">2029</text>
<text x="156.02" y="405.35">449,900</text>
<text x="213.46" y="405.35">586,219</text>
<text x="270.90" y="405.35">661,710</text>
<text x="328.34" y="405.35">994,995</text>
<text x="385.78" y="405.35">1,118,310</text>
<text x="156.02" y="417.55">430,590</text>
<text x="213.46" y="417.55">565,721</text>
<text x="270.90" y="417.55">636,168</text>
<text x="328.34" y="417.55">953,827</text>
<text x="385.78" y="417.55">1,073,147</text>
<text x="156.02" y="429.75">344,472</text>
<text x="213.46" y="429.75">452,577</text>
<text x="270.90" y="429.75">508,934</text>
<text x="328.34" y="429.75">763,061</text>
<text x="385.78" y="429.75">858,518</text>
</g>
<g fill="#595959" font-size="6.85">
<path d="M46.0 403.25H63.5" stroke="#4472c4" stroke-width="2" stroke-linecap="round"/><circle cx="54.7" cy="403.25" r="1.800" fill="#4472c4"/>
<text x="64.8" y="405.35" textLength="27.1" lengthAdjust="spacing">Revenue</text>
<path d="M46.0 415.45H63.5" stroke="#ed7d31" stroke-width="2" stroke-linecap="round"/><circle cx="54.7" cy="415.45" r="1.800" fill="#ed7d31"/>
<text x="64.8" y="417.55" textLength="21.9" lengthAdjust="spacing">EBITDA</text>
<path d="M46.0 427.65H63.5" stroke="#a5a5a5" stroke-width="2" stroke-linecap="round"/><circle cx="54.7" cy="427.65" r="1.800" fill="#a5a5a5"/>
<text x="64.8" y="429.75" textLength="60.3" lengthAdjust="spacing">Net Profit After Tax</text>
</g>
<polyline points="156.0,339.4 213.5,325.6 270.9,318.0 328.3,284.3 385.8,271.8" fill="none" stroke="#4472c4" stroke-width="2.200" stroke-linejoin="round" stroke-linecap="round"/>
<g fill="#4472c4"><circle cx="156.0" cy="339.4" r="2.050"/><circle cx="213.5" cy="325.6" r="2.050"/><circle cx="270.9" cy="318.0" r="2.050"/><circle cx="328.3" cy="284.3" r="2.050"/><circle cx="385.8" cy="271.8" r="2.050"/></g>
<polyline points="156.0,341.4 213.5,327.7 270.9,320.6 328.3,288.4 385.8,276.3" fill="none" stroke="#ed7d31" stroke-width="2.200" stroke-linejoin="round" stroke-linecap="round"/>
<g fill="#ed7d31"><circle cx="156.0" cy="341.4" r="2.050"/><circle cx="213.5" cy="327.7" r="2.050"/><circle cx="270.9" cy="320.6" r="2.050"/><circle cx="328.3" cy="288.4" r="2.050"/><circle cx="385.8" cy="276.3" r="2.050"/></g>
<polyline points="156.0,350.1 213.5,339.2 270.9,333.5 328.3,307.7 385.8,298.1" fill="none" stroke="#a5a5a5" stroke-width="2.200" stroke-linejoin="round" stroke-linecap="round"/>
<g fill="#a5a5a5"><circle cx="156.0" cy="350.1" r="2.050"/><circle cx="213.5" cy="339.2" r="2.050"/><circle cx="270.9" cy="333.5" r="2.050"/><circle cx="328.3" cy="307.7" r="2.050"/><circle cx="385.8" cy="298.1" r="2.050"/></g>
<rect x="439.7" y="256.3" width="564.7" height="183.4" fill="#fff" stroke="#dcdcdc" stroke-width="1"/>
<path d="M537.4 374.22H995.0" stroke="#dfdfdf" stroke-width=".8"/>
<path d="M537.4 362.14H995.0" stroke="#dfdfdf" stroke-width=".8"/>
<path d="M537.4 350.06H995.0" stroke="#dfdfdf" stroke-width=".8"/>
<path d="M537.4 337.98H995.0" stroke="#dfdfdf" stroke-width=".8"/>
<path d="M537.4 325.90H995.0" stroke="#dfdfdf" stroke-width=".8"/>
<path d="M537.4 313.82H995.0" stroke="#dfdfdf" stroke-width=".8"/>
<path d="M537.4 301.74H995.0" stroke="#dfdfdf" stroke-width=".8"/>
<path d="M537.4 289.66H995.0" stroke="#dfdfdf" stroke-width=".8"/>
<path d="M537.4 277.58H995.0" stroke="#dfdfdf" stroke-width=".8"/>
<path d="M537.4 265.50H995.0" stroke="#dfdfdf" stroke-width=".8"/>
<g fill="#595959" text-anchor="end" font-size="6.90">
<text x="530.5" y="388.70">0</text>
<text x="530.5" y="376.62">50,000</text>
<text x="530.5" y="364.54">100,000</text>
<text x="530.5" y="352.46">150,000</text>
<text x="530.5" y="340.38">200,000</text>
<text x="530.5" y="328.30">250,000</text>
<text x="530.5" y="316.22">300,000</text>
<text x="530.5" y="304.14">350,000</text>
<text x="530.5" y="292.06">400,000</text>
<text x="530.5" y="279.98">450,000</text>
<text x="530.5" y="267.90">500,000</text>
</g>
<path d="M537.4 386.30H995.0M453.6 398.30H995.0M453.6 410.40H995.0M453.6 422.70H995.0M453.6 434.80H995.0M453.6 398.30V434.80M537.40 386.30V434.80M575.53 386.30V434.80M613.67 386.30V434.80M651.80 386.30V434.80M689.93 386.30V434.80M728.07 386.30V434.80M766.20 386.30V434.80M804.33 386.30V434.80M842.47 386.30V434.80M880.60 386.30V434.80M918.73 386.30V434.80M956.87 386.30V434.80M995.00 386.30V434.80" stroke="#d9d9d9" stroke-width=".8" fill="none"/>
<g fill="#595959" text-anchor="middle" font-size="6.90">
<text x="556.47" y="394.40">Jan</text>
<text x="594.60" y="394.40">Feb</text>
<text x="632.73" y="394.40">Mar</text>
<text x="670.87" y="394.40">Apr</text>
<text x="709.00" y="394.40">May</text>
<text x="747.13" y="394.40">Jun</text>
<text x="785.27" y="394.40">Jul</text>
<text x="823.40" y="394.40">Aug</text>
<text x="861.53" y="394.40">Sep</text>
<text x="899.67" y="394.40">Oct</text>
<text x="937.80" y="394.40">Nov</text>
<text x="975.93" y="394.40">Dec</text>
<text x="556.47" y="406.45">330,030</text>
<text x="594.60" y="406.45">430,451</text>
<text x="632.73" y="406.45">361,850</text>
<text x="670.87" y="406.45">451,050</text>
<text x="709.00" y="406.45">366,785</text>
<text x="747.13" y="406.45">392,080</text>
<text x="785.27" y="406.45">371,015</text>
<text x="823.40" y="406.45">390,505</text>
<text x="861.53" y="406.45">397,210</text>
<text x="899.67" y="406.45">441,485</text>
<text x="937.80" y="406.45">448,480</text>
<text x="975.93" y="406.45">449,900</text>
<text x="556.47" y="418.65">311,220</text>
<text x="594.60" y="418.65">411,141</text>
<text x="632.73" y="418.65">342,540</text>
<text x="670.87" y="418.65">431,740</text>
<text x="709.00" y="418.65">347,475</text>
<text x="747.13" y="418.65">372,770</text>
<text x="785.27" y="418.65">351,705</text>
<text x="823.40" y="418.65">371,195</text>
<text x="861.53" y="418.65">377,900</text>
<text x="899.67" y="418.65">422,175</text>
<text x="937.80" y="418.65">429,170</text>
<text x="975.93" y="418.65">430,590</text>
<text x="556.47" y="430.85">248,976</text>
<text x="594.60" y="430.85">328,913</text>
<text x="632.73" y="430.85">274,032</text>
<text x="670.87" y="430.85">345,392</text>
<text x="709.00" y="430.85">277,980</text>
<text x="747.13" y="430.85">298,216</text>
<text x="785.27" y="430.85">281,364</text>
<text x="823.40" y="430.85">296,956</text>
<text x="861.53" y="430.85">302,320</text>
<text x="899.67" y="430.85">337,740</text>
<text x="937.80" y="430.85">343,336</text>
<text x="975.93" y="430.85">344,472</text>
</g>
<g fill="#595959" font-size="6.90">
<path d="M455.6 404.35H473.1" stroke="#4472c4" stroke-width="2" stroke-linecap="round"/><circle cx="464.3" cy="404.35" r="1.800" fill="#4472c4"/>
<text x="474.4" y="406.45" textLength="27.1" lengthAdjust="spacing">Revenue</text>
<path d="M455.6 416.55H473.1" stroke="#ed7d31" stroke-width="2" stroke-linecap="round"/><circle cx="464.3" cy="416.55" r="1.800" fill="#ed7d31"/>
<text x="474.4" y="418.65" textLength="21.9" lengthAdjust="spacing">EBITDA</text>
<path d="M455.6 428.75H473.1" stroke="#a5a5a5" stroke-width="2" stroke-linecap="round"/><circle cx="464.3" cy="428.75" r="1.800" fill="#a5a5a5"/>
<text x="474.4" y="430.85" textLength="60.3" lengthAdjust="spacing">Net Profit After Tax</text>
</g>
<polyline points="556.5,306.6 594.6,282.3 632.7,298.9 670.9,277.3 709.0,297.7 747.1,291.6 785.3,296.7 823.4,292.0 861.5,290.3 899.7,279.6 937.8,277.9 975.9,277.6" fill="none" stroke="#4472c4" stroke-width="2.200" stroke-linejoin="round" stroke-linecap="round"/>
<g fill="#4472c4"><circle cx="556.5" cy="306.6" r="2.050"/><circle cx="594.6" cy="282.3" r="2.050"/><circle cx="632.7" cy="298.9" r="2.050"/><circle cx="670.9" cy="277.3" r="2.050"/><circle cx="709.0" cy="297.7" r="2.050"/><circle cx="747.1" cy="291.6" r="2.050"/><circle cx="785.3" cy="296.7" r="2.050"/><circle cx="823.4" cy="292.0" r="2.050"/><circle cx="861.5" cy="290.3" r="2.050"/><circle cx="899.7" cy="279.6" r="2.050"/><circle cx="937.8" cy="277.9" r="2.050"/><circle cx="975.9" cy="277.6" r="2.050"/></g>
<polyline points="556.5,311.1 594.6,287.0 632.7,303.5 670.9,282.0 709.0,302.4 747.1,296.2 785.3,301.3 823.4,296.6 861.5,295.0 899.7,284.3 937.8,282.6 975.9,282.3" fill="none" stroke="#ed7d31" stroke-width="2.200" stroke-linejoin="round" stroke-linecap="round"/>
<g fill="#ed7d31"><circle cx="556.5" cy="311.1" r="2.050"/><circle cx="594.6" cy="287.0" r="2.050"/><circle cx="632.7" cy="303.5" r="2.050"/><circle cx="670.9" cy="282.0" r="2.050"/><circle cx="709.0" cy="302.4" r="2.050"/><circle cx="747.1" cy="296.2" r="2.050"/><circle cx="785.3" cy="301.3" r="2.050"/><circle cx="823.4" cy="296.6" r="2.050"/><circle cx="861.5" cy="295.0" r="2.050"/><circle cx="899.7" cy="284.3" r="2.050"/><circle cx="937.8" cy="282.6" r="2.050"/><circle cx="975.9" cy="282.3" r="2.050"/></g>
<polyline points="556.5,326.1 594.6,306.8 632.7,320.1 670.9,302.9 709.0,319.1 747.1,314.3 785.3,318.3 823.4,314.6 861.5,313.3 899.7,304.7 937.8,303.4 975.9,303.1" fill="none" stroke="#a5a5a5" stroke-width="2.200" stroke-linejoin="round" stroke-linecap="round"/>
<g fill="#a5a5a5"><circle cx="556.5" cy="326.1" r="2.050"/><circle cx="594.6" cy="306.8" r="2.050"/><circle cx="632.7" cy="320.1" r="2.050"/><circle cx="670.9" cy="302.9" r="2.050"/><circle cx="709.0" cy="319.1" r="2.050"/><circle cx="747.1" cy="314.3" r="2.050"/><circle cx="785.3" cy="318.3" r="2.050"/><circle cx="823.4" cy="314.6" r="2.050"/><circle cx="861.5" cy="313.3" r="2.050"/><circle cx="899.7" cy="304.7" r="2.050"/><circle cx="937.8" cy="303.4" r="2.050"/><circle cx="975.9" cy="303.1" r="2.050"/></g>
</svg>
</div>
<div class="abs" style="left:1011px;top:52.500px;width:13px;height:519.700px;background:#f3f3f3;border-left:1px solid #e2e2e2;box-sizing:border-box"></div>
<div class="abs" style="left:1015.400px;top:258px;width:5.400px;height:155.500px;background:#7a7a7a;border-radius:2.700px"></div>
<svg class="abs" style="left:1011px;top:51.500px" width="13" height="521" viewBox="1011 51.500 13 521"><path d="M1014.900 59.700H1021L1017.950 55.700Z" fill="#7a7a7a"/><path d="M1015 565.700H1021.200L1018.100 570.300Z" fill="#7a7a7a"/></svg>
<div class="abs" style="left:0;top:572.2px;width:1024px;height:21.8px;background:#e9ebef"></div>
<div class="abs" style="left:0;top:594.0px;width:1024px;height:12.0px;background:#f3f3f3"></div>
<div class="abs" style="left:122.35px;top:575.300px;width:41.95px;height:15.200px;background:#ffff85;border-radius:3px"></div>
<div class="abs" style="left:271.200px;top:571.7px;width:124.300px;height:18.6px;background:#fff;border-radius:0 0 3.500px 3.500px"></div>
<div class="abs" style="left:276.5px;top:587.900px;width:113.5px;height:1.300px;background:#3d9265;border-radius:1px"></div>
<div class="abs" style="left:401.60px;top:575.300px;width:41.20px;height:15.200px;background:#ffff85;border-radius:3px"></div>
<div class="abs" style="left:679.85px;top:575.300px;width:41.70px;height:15.200px;background:#ffff85;border-radius:3px"></div>
<div class="abs" style="left:118.00px;top:577px;width:1px;height:12px;background:#d9dbdf"></div>
<div class="abs" style="left:216.50px;top:577px;width:1px;height:12px;background:#d9dbdf"></div>
<div class="abs" style="left:495.00px;top:577px;width:1px;height:12px;background:#d9dbdf"></div>
<div class="abs" style="left:546.25px;top:577px;width:1px;height:12px;background:#d9dbdf"></div>
<div class="abs" style="left:675.10px;top:577px;width:1px;height:12px;background:#d9dbdf"></div>
<div class="abs" style="left:774.00px;top:577px;width:1px;height:12px;background:#d9dbdf"></div>
<div class="abs" style="left:824.50px;top:577px;width:1px;height:12px;background:#d9dbdf"></div>
<span class="abs" style="left:81.50px;top:578.8px;font-size:9.0px;line-height:11px;letter-spacing:0.206px;white-space:pre;color:#3b3b3b">How to</span>
<span class="abs" style="left:128.25px;top:578.8px;font-size:9.0px;line-height:11px;letter-spacing:-0.112px;white-space:pre;color:#3b3b3b">IS 2025</span>
<span class="abs" style="left:175.75px;top:578.8px;font-size:9.0px;line-height:11px;letter-spacing:-0.326px;white-space:pre;color:#3b3b3b">CF 2025</span>
<span class="abs" style="left:226.50px;top:578.8px;font-size:9.0px;line-height:11px;letter-spacing:-0.219px;white-space:pre;color:#3b3b3b">BS 2025</span>
<span class="abs" style="left:276.50px;top:576.9px;font-size:9.0px;line-height:11px;letter-spacing:-0.046px;white-space:pre;color:#1f1f1f;font-weight:bold">Statements Summary 2025</span>
<span class="abs" style="left:407.50px;top:578.8px;font-size:9.0px;line-height:11px;letter-spacing:-0.219px;white-space:pre;color:#3b3b3b">IS 2026</span>
<span class="abs" style="left:454.25px;top:578.8px;font-size:9.0px;line-height:11px;letter-spacing:-0.254px;white-space:pre;color:#3b3b3b">CF 2026</span>
<span class="abs" style="left:505.00px;top:578.8px;font-size:9.0px;line-height:11px;letter-spacing:-0.290px;white-space:pre;color:#3b3b3b">BS 2026</span>
<span class="abs" style="left:556.75px;top:578.8px;font-size:9.0px;line-height:11px;letter-spacing:0.052px;white-space:pre;color:#3b3b3b">Statements Summary 2026</span>
<span class="abs" style="left:685.75px;top:578.8px;font-size:9.0px;line-height:11px;letter-spacing:-0.147px;white-space:pre;color:#3b3b3b">IS 2027</span>
<span class="abs" style="left:732.50px;top:578.8px;font-size:9.0px;line-height:11px;letter-spacing:-0.219px;white-space:pre;color:#3b3b3b">CF 2027</span>
<span class="abs" style="left:783.00px;top:578.8px;font-size:9.0px;line-height:11px;letter-spacing:-0.290px;white-space:pre;color:#3b3b3b">BS 2027</span>
<span class="abs" style="left:835.00px;top:578.8px;font-size:9.0px;line-height:11px;letter-spacing:-0.017px;white-space:pre;color:#3b3b3b">Statements Sum</span>
<svg class="abs" style="left:0;top:572px" width="1024" height="34" viewBox="0 572 1024 34" fill="none" stroke-linecap="round" stroke-linejoin="round">
<path d="M20.700 579.700L17.400 582.800L20.700 585.900" stroke="#b5b5b5" stroke-width=".9"/>
<path d="M38.800 579.700L42.100 582.800L38.800 585.900" stroke="#6a6a6a" stroke-width=".9"/>
<g fill="#444"><circle cx="909.200" cy="582.600" r=".85"/><circle cx="911.700" cy="582.600" r=".85"/><circle cx="914.200" cy="582.600" r=".85"/></g>
<path d="M929.300 582.500H936.500M932.900 578.900V586.100" stroke="#3a3a3a" stroke-width=".9"/>
<g fill="#444"><circle cx="954.700" cy="580.400" r=".75"/><circle cx="954.700" cy="583.100" r=".75"/><circle cx="954.700" cy="585.800" r=".75"/></g>
<rect x="966.400" y="578" width="45.800" height="9.900" rx="4.950" fill="#f6f6f6"/>
<path d="M973 580.600V585.200L969.300 582.900Z" fill="#4f4f4f"/><path d="M1005.200 580.600V585.200L1008.900 582.900Z" fill="#4f4f4f"/>
<rect x="976.800" y="580" width="20.100" height="5.900" rx="2.950" fill="#707070"/>
<rect x="827" y="594" width="25.300" height="12" fill="#dadada"/>
<g stroke="#4a4a4a" stroke-width=".8">
<path d="M835.200 597.200H843.800V604.800H835.200ZM835.200 599.700H843.800M835.200 602.300H843.800M838.100 597.200V604.800M841 597.200V604.800"/>
<path d="M861.600 597.200H870.600V604.800H861.600ZM864 599.200H868.200V602.900H864Z"/>
<path d="M888.500 598.800V604.800H897.200V597.200H893V601H888.500"/>
<path d="M910.200 600.800H914.400M988.500 600.800H992.500M990.500 598.800V602.800" stroke="#666" stroke-width=".8"/>
<path d="M918.600 600.800H985" stroke="#8a8a8a" stroke-width=".7"/>
</g>
<rect x="949.300" y="597.400" width="2.400" height="7.300" fill="#5a5a5a"/>
<g stroke="#4a4a4a" stroke-width=".8"><path d="M40.700 597.600H49.500V606M40.700 597.600V606"/><path d="M40.700 598.200H49.500" stroke-width="1.600"/><circle cx="46.200" cy="602.500" r="2.200" fill="#f3f3f3"/><circle cx="46.200" cy="602.500" r="1" fill="#4a4a4a" stroke="none"/></g>
<g stroke="#3a3a3a" stroke-width=".8"><circle cx="66" cy="597.900" r="1"/><path d="M62 600H70M66 600V602.600M66 602.600L63.600 605.800M66 602.600L68.600 605.800M68 602.600L71 605.600M71 602.600L68 605.600"/></g>
</svg>
<span class="abs" style="left:7.50px;top:597.3px;font-size:6.8px;line-height:9px;letter-spacing:-0.081px;white-space:pre;color:#444;font-weight:400">Ready</span>
<span class="abs" style="left:73.00px;top:597.3px;font-size:6.8px;line-height:9px;letter-spacing:-0.008px;white-space:pre;color:#2a2a2a;font-weight:700">Accessibility: Investigate</span>
<span class="abs" style="left:1002.30px;top:597.3px;font-size:6.3px;line-height:9px;letter-spacing:-0.103px;white-space:pre;color:#444;font-weight:400">96%</span>
</body></html>
